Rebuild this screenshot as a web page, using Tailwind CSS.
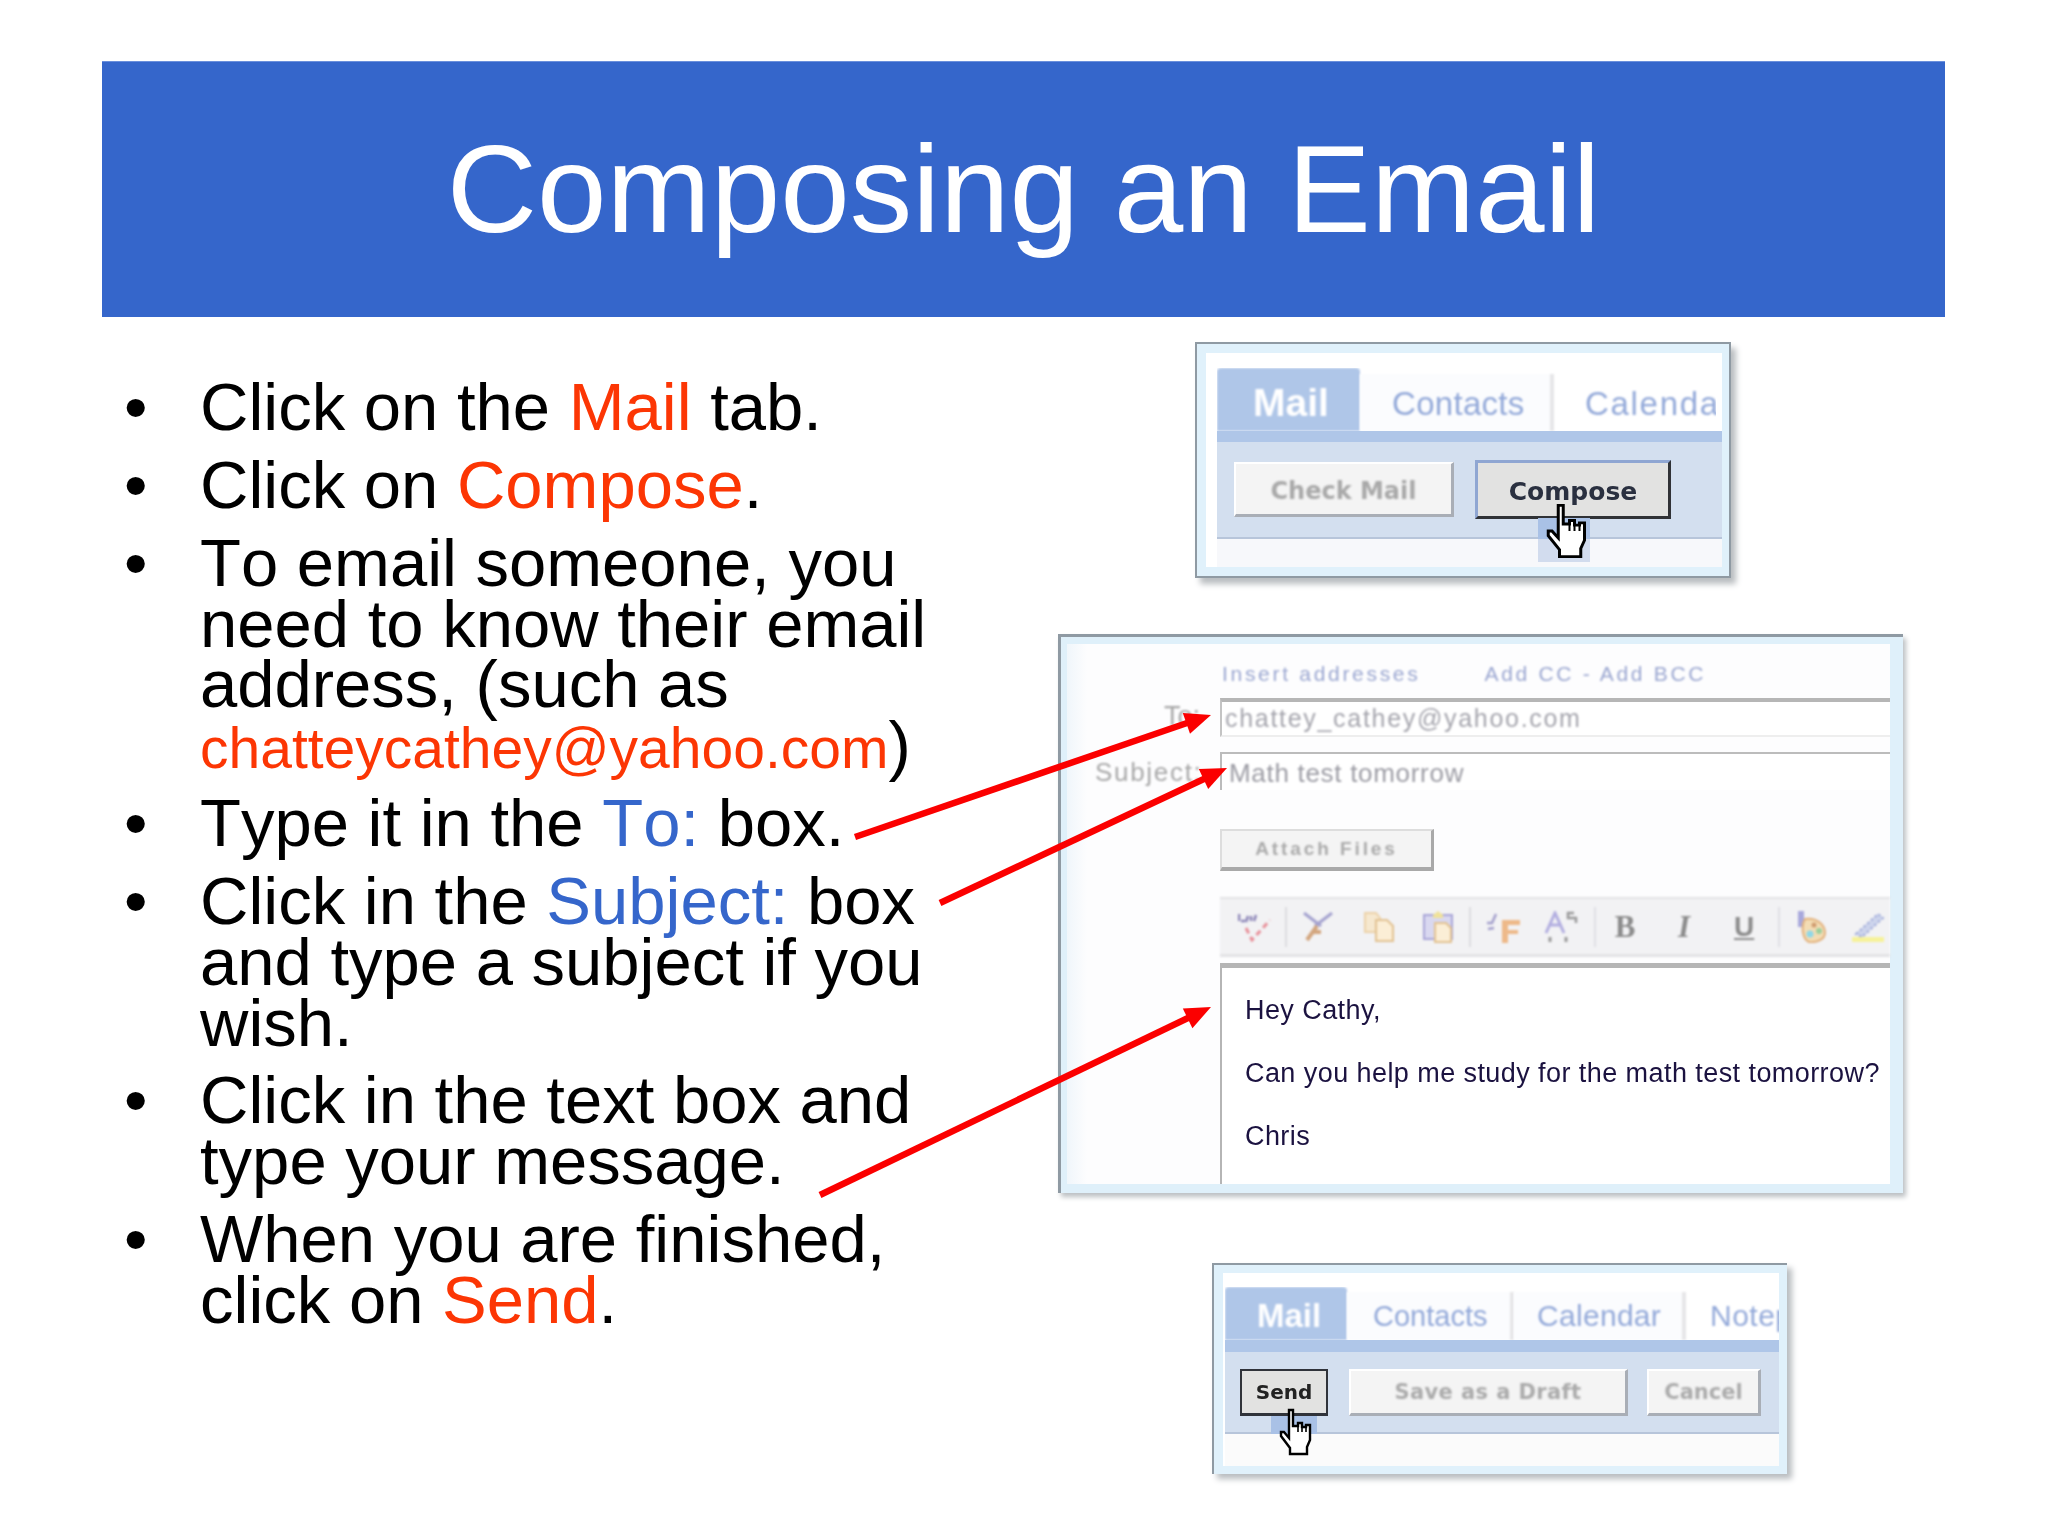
<!doctype html>
<html>
<head>
  <meta charset="utf-8">
  <title>Composing an Email</title>
  <script src="https://cdn.jsdelivr.net/npm/@tailwindcss/browser@4"></script>
</head>
<body class="bg-white">
<div class="relative w-[2048px] h-[1536px] overflow-hidden bg-white font-['Liberation_Sans',Arial,sans-serif] text-black">

  <!-- title bar -->
  <div class="pt-[61px] pl-[102px]">
    <h1 class="w-[1843px] h-[256px] bg-[#3566cb] border-t border-[#6a8fdc] pt-[62px] text-center text-[125px] leading-[130px] text-white">Composing an Email</h1>
  </div>

  <div class="flex">
    <!-- bullets -->
    <ul class="w-[1058px] pl-[122px] pt-[60px] text-[67px] leading-[60.85px] flex flex-col gap-[17px] [font-kerning:none]">
      <li class="flex"><span class="w-[78px] pl-[2px] shrink-0">•</span><span>Click on the <span class="text-[#fc3604]">Mail</span> tab.</span></li>
      <li class="flex"><span class="w-[78px] pl-[2px] shrink-0">•</span><span>Click on <span class="text-[#fc3604]">Compose</span>.</span></li>
      <li class="flex"><span class="w-[78px] pl-[2px] shrink-0">•</span><span class="whitespace-nowrap">To email someone, you<br>need to know their email<br>address, (such as<br><span class="text-[#fc3604] text-[57px] leading-[0]">chatteycathey@yahoo.com</span>)</span></li>
      <li class="flex"><span class="w-[78px] pl-[2px] shrink-0">•</span><span>Type it in the <span class="text-[#3566cb]">To:</span> box.</span></li>
      <li class="flex"><span class="w-[78px] pl-[2px] shrink-0">•</span><span class="whitespace-nowrap">Click in the <span class="text-[#3566cb]">Subject:</span> box<br>and type a subject if you<br>wish.</span></li>
      <li class="flex"><span class="w-[78px] pl-[2px] shrink-0">•</span><span class="whitespace-nowrap">Click in the text box and<br>type your message.</span></li>
      <li class="flex"><span class="w-[78px] pl-[2px] shrink-0">•</span><span class="whitespace-nowrap">When you are finished,<br>click on <span class="text-[#fc3604]">Send</span>.</span></li>
    </ul>

    <!-- screenshots -->
    <div class="pt-[25px]">

      <!-- compose tab -->
      <div class="relative ml-[137px] w-[536px] h-[236px] border-2 border-[#8f9aa3] bg-[#e0f1fb] pt-[9px] pl-[9px] pr-[7px] pb-[9px] shadow-[5px_6px_6px_#b9bdc0]">
        <div class="h-full bg-white pt-[15px] pl-[11px] flex flex-col">
          <div class="flex h-[63px] overflow-hidden mr-[6px]">
            <div class="w-[143px] shrink-0 rounded-t-[4px] bg-[#afc6e8] pl-[36px] pt-[12px] text-[39px] leading-[46px] font-bold text-white blur-[1px]">Mail</div>
            <div class="w-[194px] shrink-0 bg-[#fbfcfe] border-r-[4px] border-[#e6e6e8] pl-[32px] pt-[11px] mt-[6px] text-[33px] leading-[38px] tracking-[0.3px] text-[#93a9d9] blur-[1px]">Contacts</div>
            <div class="shrink-0 pl-[31px] pt-[17px] text-[33px] leading-[38px] tracking-[1.7px] text-[#93a9d9] blur-[1px]">Calendar</div>
          </div>
          <div class="h-[11px] bg-[#afc6e8]"></div>
          <div class="h-[97px] bg-[#d3dfef] border-b-2 border-[#b7c5da] pl-[17px] pt-[18px] flex items-start gap-[21px] font-['DejaVu_Sans',sans-serif] font-bold">
            <div class="w-[220px] h-[55px] mt-[2px] bg-[#f4f4f4] border-t-2 border-l-2 border-white border-r-[3px] border-b-[3px] border-r-[#a9aeb6] border-b-[#a9aeb6] text-center text-[24px] leading-[54px] text-[#a9a9a9]"><span class="blur-[0.8px] inline-block">Check Mail</span></div>
            <div class="w-[196px] h-[59px] bg-[#e2e2e1] border-t-[3px] border-l-[3px] border-[#8fa6d2] border-r-[3px] border-b-[3px] border-r-[#303236] border-b-[#303236] text-center text-[25px] leading-[57px] text-[#2a3040]"><span class="blur-[0.6px] inline-block">Compose</span></div>
          </div>
          <div class="flex-1 bg-[#f7f8fb]"></div>
        </div>
        <div class="absolute left-[341px] top-[174px] w-[52px] h-[44px] bg-[linear-gradient(#a9c1e6_47%,#d2dcee_47%)]"></div>
        <svg class="absolute left-[345px] top-[159px] w-[50px] h-[56px]" viewBox="0 0 20 24" preserveAspectRatio="none"><path d="M6.5 1H8.5V9H11V7.5H13V9.5H15V8.5H17V16L15.5 19.5V23H7V20L2.5 14V12H4L6.5 15Z" fill="#fff" stroke="#000" stroke-width="1.2"/><path d="M11 9V12M13 9.5V12M15 9V12" stroke="#000" stroke-width="0.8"/></svg>
      </div>

      <!-- compose form -->
      <div class="relative mt-[56px] w-[845px] h-[559px] border-t-[3px] border-l-[3px] border-[#8f9aa3] bg-[#dff0fa] pt-[7px] pl-[6px] pr-[13px] pb-[9px] shadow-[3px_4px_5px_#bcc0c3] font-['Liberation_Sans',sans-serif]">
        <div class="h-full bg-[linear-gradient(90deg,#f0f6fb,#fdfdfe_20px)] flex flex-col">
          <div class="h-[54px] pl-[155px] pt-[17px] flex text-[21px] leading-[26px] tracking-[2.7px] text-[#9aa6d0] whitespace-nowrap">
            <span class="blur-[0.8px] inline-block">Insert addresses</span>
            <span class="blur-[0.8px] inline-block ml-[64px]">Add CC - Add BCC</span>
          </div>
          <div class="flex h-[39px]">
            <div class="w-[153px] shrink-0 pr-[20px] text-right text-[27px] leading-[36px] text-[#a8a8a8]"><span class="blur-[0.8px] inline-block">To:</span></div>
            <div class="flex-1 bg-white border-t-4 border-l-2 border-b-2 border-t-[#b6b6b6] border-l-[#c4c4c4] border-b-[#eeeeee] pl-[3px] text-[25px] leading-[33px] tracking-[1.7px] text-[#a5a5ad]"><span class="blur-[0.8px] inline-block">chattey_cathey@yahoo.com</span></div>
          </div>
          <div class="flex h-[38px] mt-[15px]">
            <div class="w-[153px] shrink-0 pl-[28px] text-[26px] leading-[40px] tracking-[1.7px] text-[#a8a8a8] whitespace-nowrap"><span class="blur-[0.8px] inline-block">Subject:</span></div>
            <div class="flex-1 border-t-2 border-l-2 border-[#bcbcbc] bg-white pl-[7px] text-[26px] leading-[38px] tracking-[0.7px] text-[#9c9ca4]"><span class="blur-[0.8px] inline-block">Math test tomorrow</span></div>
          </div>
          <div class="pl-[153px] mt-[39px]">
            <div class="w-[214px] h-[42px] bg-[#f4f4f4] border-t-2 border-l-2 border-[#dddddd] border-r-[3px] border-b-[4px] border-r-[#a9a9a9] border-b-[#a9a9a9] text-center text-[19px] leading-[36px] tracking-[2.9px] font-bold text-[#aaaaaa]"><span class="blur-[0.8px] inline-block">Attach Files</span></div>
          </div>
          <div class="pl-[153px] mt-[26px]">
            <!-- editor toolbar -->
            <div class="h-[60px] bg-[#f2f2f4] border-t-2 border-b-[3px] border-[#e3e3e5] flex items-center blur-[1px] overflow-hidden">
              <svg class="ml-[18px] w-[34px] h-[30px]" viewBox="0 0 34 30"><path d="M1 9V2M3 9H7M10 4L8 10M13 9V4M16 9L18 3" stroke="#8d86b8" stroke-width="2.5" fill="none"/><path d="M8 16L14 28L32 8" stroke="#e8909a" stroke-width="3" stroke-dasharray="6 4" fill="none"/></svg>
              <div class="ml-[13px] w-[2px] h-[40px] bg-[#dcdce0]"></div>
              <svg class="ml-[16px] w-[30px] h-[30px]" viewBox="0 0 30 30"><path d="M1 1L18 14M29 1L12 14" stroke="#a4a2cf" stroke-width="3" fill="none"/><path d="M14 14L4 28M10 20H18" stroke="#d3a67f" stroke-width="4" fill="none"/></svg>
              <svg class="ml-[31px] w-[30px] h-[30px]" viewBox="0 0 30 30"><path d="M1 1H12L16 6V20H1Z" fill="#f6e8cf" stroke="#ecd2a9" stroke-width="2"/><path d="M12 8H23L29 14V29H12Z" fill="#fbeed6" stroke="#e2c292" stroke-width="2"/></svg>
              <svg class="ml-[29px] w-[30px] h-[32px]" viewBox="0 0 30 32"><path d="M1 4H29V28H1Z" fill="#d9d8f0" stroke="#a9a6d8" stroke-width="2"/><path d="M10 4L15 0L20 4V7H10Z" fill="#f0e29a"/><path d="M12 12H23L28 17V31H12Z" fill="#fbeed6" stroke="#e2c292" stroke-width="2"/></svg>
              <div class="ml-[16px] w-[2px] h-[40px] bg-[#dcdce0]"></div>
              <svg class="ml-[15px] w-[36px] h-[32px]" viewBox="0 0 36 32"><path d="M1 12H6L10 3M2 18L8 17" stroke="#a39fcc" stroke-width="2.5" fill="none"/><path d="M16 9H34V14H22V19H32V23H22V32H16Z" fill="#eeb989"/></svg>
              <svg class="ml-[22px] w-[38px] h-[32px]" viewBox="0 0 38 32"><path d="M2 22L11 2L20 22M6 14H16" stroke="#b2aee0" stroke-width="3" fill="none"/><path d="M30 2H24V7H32V12" stroke="#9a9a9a" stroke-width="2.5" fill="none"/><path d="M6 26V31M22 26V31" stroke="#9a9a9a" stroke-width="3"/></svg>
              <div class="ml-[12px] w-[2px] h-[40px] bg-[#e0e0e4]"></div>
              <span class="ml-[17px] w-[24px] text-[31px] leading-[34px] font-bold font-['Liberation_Serif',serif] text-[#8c8c8c] text-center">B</span>
              <span class="ml-[37px] w-[20px] text-[31px] leading-[34px] font-bold italic font-['Liberation_Serif',serif] text-[#8c8c8c] text-center">I</span>
              <span class="ml-[40px] w-[20px] text-[28px] leading-[34px] font-bold underline text-[#8c8c8c] text-center">U</span>
              <div class="ml-[24px] w-[2px] h-[40px] bg-[#e0e0e4]"></div>
              <svg class="ml-[17px] w-[30px] h-[32px]" viewBox="0 0 30 32"><path d="M1 0H7V16H1Z" fill="#a8a8dc"/><path d="M8 8C20 6 28 14 28 22C28 28 20 32 12 31C5 28 4 14 8 8Z" fill="#f3dcb4" stroke="#e3b27d" stroke-width="2"/><circle cx="17" cy="14" r="2.5" fill="#cf9b6f"/><circle cx="22" cy="20" r="3" fill="#9ccf9c"/><circle cx="13" cy="23" r="3.5" fill="#8fd8e8"/></svg>
              <svg class="ml-[25px] w-[32px] h-[30px]" viewBox="0 0 32 30"><path d="M4 22L26 2L31 6L10 25Z" fill="#cdd4ec" stroke="#a3aedb" stroke-width="2" stroke-dasharray="3 2"/><path d="M0 25H32V30H0Z" fill="#f6f29a"/></svg>
            </div>
          </div>
          <div class="pl-[153px] mt-[6px] flex-1">
            <div class="h-full bg-white border-t-[5px] border-l-2 border-[#b5b5b5] pl-[23px] pt-[29px] text-[27px] leading-[26px] tracking-[0.43px] text-[#1b1240] whitespace-nowrap flex flex-col gap-[37px]">
              <span class="blur-[0.5px] inline-block">Hey Cathy,</span>
              <span class="blur-[0.5px] inline-block">Can you help me study for the math test tomorrow?</span>
              <span class="blur-[0.5px] inline-block">Chris</span>
            </div>
          </div>
        </div>
      </div>

      <!-- send -->
      <div class="relative mt-[70px] ml-[154px] w-[575px] h-[211px] border-t-2 border-l-2 border-[#8f9aa3] bg-[#e0f1fb] pt-[8px] pl-[9px] pr-[8px] pb-[8px] shadow-[5px_5px_6px_#b9bdc0]">
        <div class="h-full bg-white pt-[14px] pl-[2px] flex flex-col">
          <div class="flex h-[53px] overflow-hidden">
            <div class="w-[122px] shrink-0 rounded-t-[4px] bg-[#afc6e8] pl-[32px] pt-[10px] text-[33px] leading-[38px] font-bold text-white blur-[1px]">Mail</div>
            <div class="w-[167px] shrink-0 bg-[#fbfcfe] border-r-[4px] border-[#e6e6e8] mt-[5px] pl-[26px] pt-[6px] text-[29px] leading-[36px] text-[#93a9d9] blur-[1px]">Contacts</div>
            <div class="w-[172px] shrink-0 bg-[#fbfcfe] border-r-[4px] border-[#e6e6e8] mt-[5px] pl-[23px] pt-[6px] text-[30px] leading-[36px] tracking-[0.3px] text-[#93a9d9] blur-[1px]">Calendar</div>
            <div class="shrink-0 pl-[24px] pt-[11px] text-[30px] leading-[36px] tracking-[0.5px] text-[#93a9d9] blur-[1px]">Notepad</div>
          </div>
          <div class="h-[12px] bg-[#afc6e8]"></div>
          <div class="h-[82px] bg-[#d3dfef] border-b-2 border-[#b7c5da] pl-[15px] pt-[17px] flex items-start font-['DejaVu_Sans',sans-serif] font-bold text-[21px] leading-[42px]">
            <div class="w-[88px] h-[47px] bg-[#e2e2e1] border-t-2 border-l-2 border-r-2 border-b-[3px] border-[#30333a] text-center text-[#222222] text-[20px]"><span class="blur-[0.6px] inline-block">Send</span></div>
            <div class="w-[279px] h-[47px] ml-[21px] bg-[#f4f4f4] border-t-2 border-l-2 border-white border-r-[3px] border-b-[3px] border-r-[#a9aeb6] border-b-[#a9aeb6] text-center tracking-[0.4px] text-[#ababab]"><span class="blur-[0.8px] inline-block">Save as a Draft</span></div>
            <div class="w-[114px] h-[47px] ml-[19px] bg-[#f4f4f4] border-t-2 border-l-2 border-white border-r-[3px] border-b-[3px] border-r-[#a9aeb6] border-b-[#a9aeb6] text-center text-[#ababab]"><span class="blur-[0.8px] inline-block">Cancel</span></div>
          </div>
          <div class="flex-1 bg-[#fbfbfb]"></div>
        </div>
        <div class="absolute left-[57px] top-[151px] w-[46px] h-[18px] bg-[#a9c1e6]"></div>
        <svg class="absolute left-[62px] top-[143px] w-[40px] h-[48px]" viewBox="0 0 20 24" preserveAspectRatio="none"><path d="M6.5 1H8.5V9H11V7.5H13V9.5H15V8.5H17V16L15.5 19.5V23H7V20L2.5 14V12H4L6.5 15Z" fill="#fff" stroke="#000" stroke-width="1.2"/><path d="M11 9V12M13 9.5V12M15 9V12" stroke="#000" stroke-width="0.8"/></svg>
      </div>
    </div>
  </div>

  <!-- red arrows over the slide -->
  <svg class="absolute left-0 top-0 w-[2048px] h-[1536px] pointer-events-none" viewBox="0 0 2048 1536">
    <g stroke="#fb0000" stroke-width="6.5" fill="none">
      <path d="M855 837L1190 722"/>
      <path d="M940 903L1206 778"/>
      <path d="M820 1195L1190 1017"/>
    </g>
    <g fill="#fb0000">
      <path d="M1211 715L1190 733.8L1182.8 713Z"/>
      <path d="M1227 768L1208.2 789L1198.8 769Z"/>
      <path d="M1211 1007L1192.4 1028.2L1182.8 1008.4Z"/>
    </g>
  </svg>
</div>
</body>
</html>
